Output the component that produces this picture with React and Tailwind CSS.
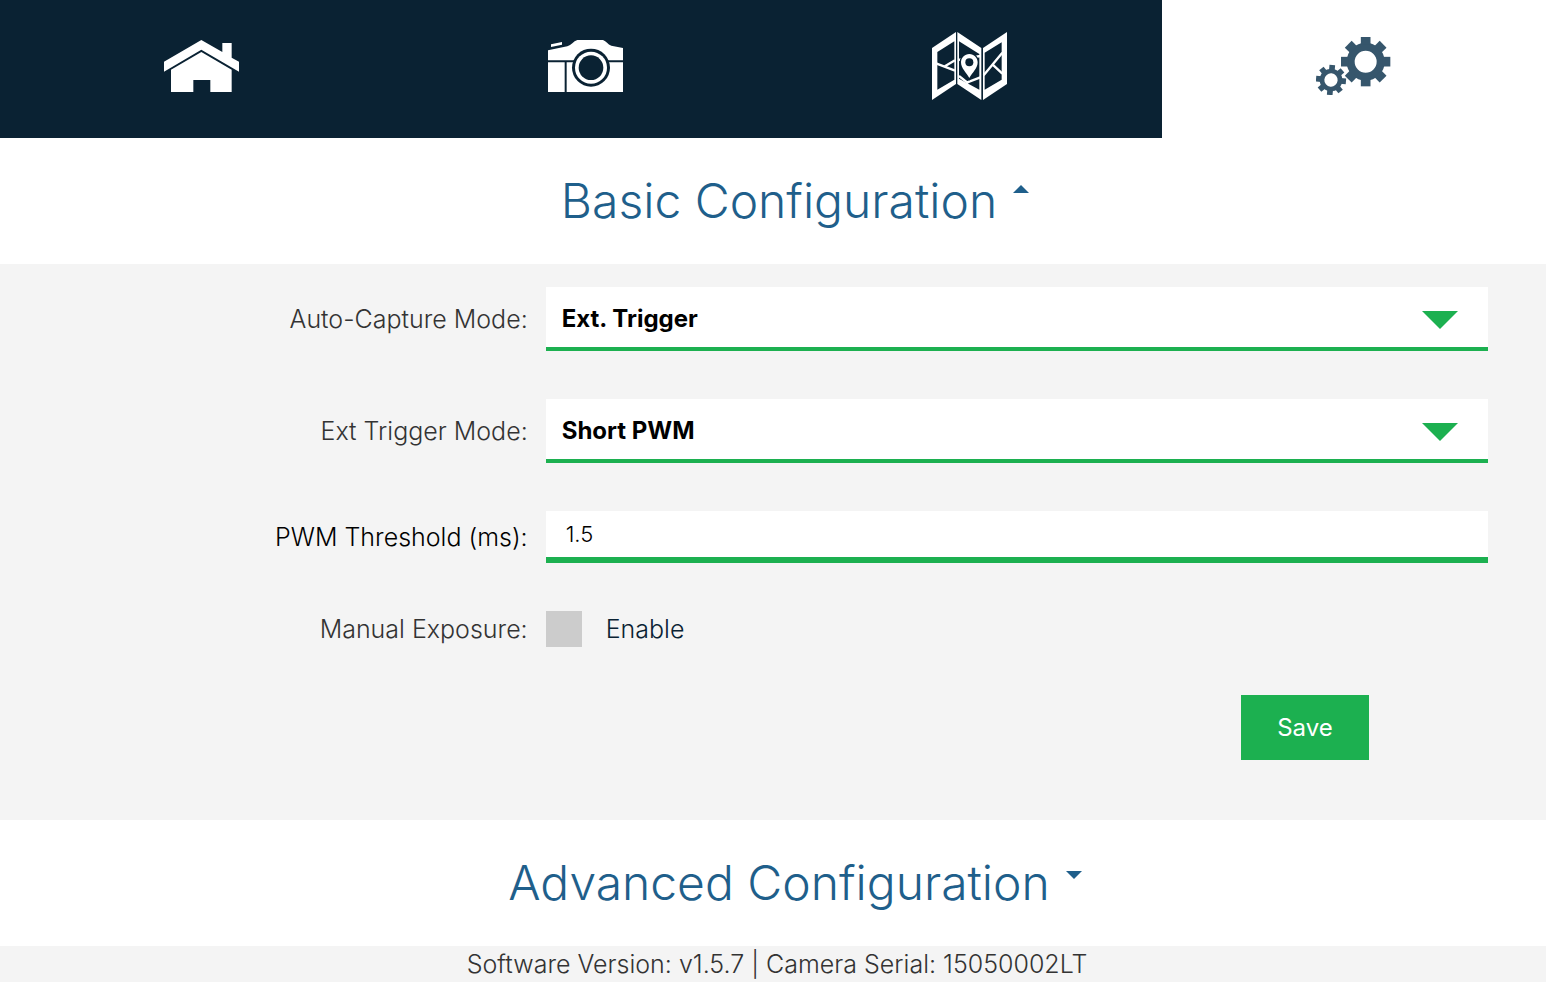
import { useState } from "react";

function HomeIcon() {
  return (
    <svg viewBox="0 0 225 156" className="w-[75px]" fill="currentColor" aria-hidden="true">
      <path d="M0 65 112 0l63 36V9h28v44l22 12v30L112 29 0 95z" />
      <path d="M21 89 112 36l91 53v67h-64v-36H88v36H21z" />
    </svg>
  );
}

function CameraIcon() {
  return (
    <svg viewBox="0 0 225 156" className="w-[75px]" fill="currentColor" aria-hidden="true">
      <path d="m9 13 33-7v8L9 21z" />
      <path d="M0 31 58 19C70 15 76 4 88 0h77c10 4 14 13 25 17l35 7v37H0z" />
      <path d="M0 67h50v89H0zM56 67h169v89H56z" />
      <circle cx="129" cy="83" r="57" className="fill-[#0a2233]" />
      <circle cx="129" cy="83" r="48" />
      <circle cx="129" cy="83" r="37" className="fill-[#0a2233]" />
    </svg>
  );
}

function MapIcon() {
  return (
    <svg viewBox="0 0 225 204" className="w-[75px]" fill="currentColor" aria-hidden="true">
      <path fillRule="evenodd" d="M0 48 72 0v156L0 204zM16 60v113l51-30V28z" />
      <path fillRule="evenodd" d="M76 0l72 48v156l-72-48zM81 28v112l61 33V66z" />
      <path fillRule="evenodd" d="M153 48 225 0v156l-72 48zM158 62v111l51-30V31z" />
      <g fill="none" stroke="currentColor" strokeWidth="7">
        <path d="m14 95 55 21M36 104l33-19" />
        <path d="m79 84 66-12M81 132l28 22M104 152l41-16" />
        <path d="m155 130 56-68M182 98l29 27" />
      </g>
      <path
        d="M112 66c-14 0-25 11-25 25 0 18 16 31 25 47 9-16 25-29 25-47 0-14-11-25-25-25z"
        className="stroke-[#0a2233]"
        strokeWidth="8"
      />
      <path d="M112 66c-14 0-25 11-25 25 0 18 16 31 25 47 9-16 25-29 25-47 0-14-11-25-25-25z" />
      <circle cx="112" cy="91" r="12" className="fill-[#0a2233]" />
    </svg>
  );
}

function Gear({ cx, cy, r, body, hole, tooth, tilt }) {
  return (
    <g transform={`translate(${cx} ${cy}) rotate(${tilt})`}>
      <circle r={(body + hole) / 2} fill="none" stroke="currentColor" strokeWidth={body - hole} />
      {[0, 45, 90, 135, 180, 225, 270, 315].map((angle) => (
        <rect
          key={angle}
          x={-tooth / 2}
          y={-r}
          width={tooth}
          height={r - body + 6}
          transform={`rotate(${angle})`}
        />
      ))}
    </g>
  );
}

function GearsIcon() {
  return (
    <svg viewBox="0 0 225 174" className="w-[75px]" fill="currentColor" aria-hidden="true">
      <Gear cx={149} cy={74} r={74} body={57} hole={33} tooth={29} tilt={0} />
      <Gear cx={45} cy={129} r={45} body={34} hole={20} tooth={17} tilt={5} />
    </svg>
  );
}

const tabs = [
  { name: "Home", Icon: HomeIcon },
  { name: "Camera", Icon: CameraIcon },
  { name: "Map", Icon: MapIcon },
  { name: "Settings", Icon: GearsIcon },
];

function SectionHeader({ title, open, onClick }) {
  return (
    <h2 className="bg-white">
      <button
        type="button"
        aria-expanded={open}
        onClick={onClick}
        className="flex h-[126px] w-full items-center justify-center gap-4 pl-11 text-5xl font-light text-[#1f5f8b]"
      >
        {title}
        {open ? (
          <svg viewBox="0 0 16 8" className="mb-6 w-4" fill="currentColor" aria-hidden="true">
            <path d="M0 8 8 0l8 8z" />
          </svg>
        ) : (
          <svg viewBox="0 0 16 8" className="mb-4 w-4" fill="currentColor" aria-hidden="true">
            <path d="M0 0h16L8 8z" />
          </svg>
        )}
      </button>
    </h2>
  );
}

function Row({ id, label, dark, children }) {
  return (
    <div className="grid grid-cols-[14fr_25fr] items-center gap-[18px]">
      <label
        htmlFor={id}
        className={`text-right text-[25px] leading-8 font-light ${dark ? "text-black" : "text-[#333333]"}`}
      >
        {label}
      </label>
      {children}
    </div>
  );
}

function Select({ id, options }) {
  return (
    <div className="relative">
      <select
        id={id}
        className="block h-16 w-full appearance-none border-b-4 border-[#1cb050] bg-white pt-1 pr-20 pl-4 text-2xl font-bold text-black outline-none"
      >
        {options.map((option) => (
          <option key={option}>{option}</option>
        ))}
      </select>
      <svg
        viewBox="0 0 36 18"
        className="pointer-events-none absolute top-6 right-[30px] w-9 text-[#1cb050]"
        fill="currentColor"
        aria-hidden="true"
      >
        <path d="M0 0h36L18 18z" />
      </svg>
    </div>
  );
}

export default function App() {
  const [activeTab, setActiveTab] = useState("Settings");
  const [openSection, setOpenSection] = useState("basic");
  const [threshold, setThreshold] = useState("1.5");

  const toggle = (section) => setOpenSection(openSection === section ? null : section);

  return (
    <div className="min-h-screen bg-white font-[Inter,'Liberation_Sans',sans-serif]">
      <nav className="flex bg-[#0a2233] pl-[10px]">
        {tabs.map(({ name, Icon }) => (
          <button
            key={name}
            type="button"
            aria-label={name}
            onClick={() => setActiveTab(name)}
            className={`flex h-[138px] flex-1 items-center justify-center pr-0.5 pb-1.5 ${
              activeTab === name ? "bg-white text-[#36566c]" : "text-white"
            }`}
          >
            <Icon />
          </button>
        ))}
      </nav>

      <SectionHeader
        title="Basic Configuration"
        open={openSection === "basic"}
        onClick={() => toggle("basic")}
      />

      {openSection === "basic" && (
        <form
          onSubmit={(e) => e.preventDefault()}
          className="flex flex-col gap-12 bg-[#f4f4f4] pt-[23px] pr-[58px] pb-[60px]"
        >
          <Row id="capture-mode" label="Auto-Capture Mode:">
            <Select id="capture-mode" options={["Ext. Trigger", "Timer", "Overlap"]} />
          </Row>
          <Row id="trigger-mode" label="Ext Trigger Mode:">
            <Select id="trigger-mode" options={["Short PWM", "Long PWM", "GPIO"]} />
          </Row>
          <Row id="threshold" label="PWM Threshold (ms):" dark>
            <input
              id="threshold"
              type="text"
              value={threshold}
              onChange={(e) => setThreshold(e.target.value)}
              className="h-[52px] w-full border-b-6 border-[#1cb050] bg-white px-5 text-[22px] font-light text-black outline-none"
            />
          </Row>
          <Row id="exposure" label="Manual Exposure:">
            <div className="flex items-center gap-6">
              <input
                id="exposure"
                type="checkbox"
                className="size-9 appearance-none bg-[#cccccc] checked:bg-[#1cb050]"
              />
              <label htmlFor="exposure" className="text-[25px] leading-8 font-light text-[#0a2233]">
                Enable
              </label>
            </div>
          </Row>
          <div className="flex justify-end pr-[119px]">
            <button type="submit" className="h-[65px] w-32 bg-[#1cb050] text-2xl text-white">
              Save
            </button>
          </div>
        </form>
      )}

      <SectionHeader
        title="Advanced Configuration"
        open={openSection === "advanced"}
        onClick={() => toggle("advanced")}
      />

      <footer className="bg-[#f4f4f4] pl-2 text-center text-[25px] leading-9 font-light text-[#333333]">
        Software Version: v1.5.7 | Camera Serial: 15050002LT
      </footer>
    </div>
  );
}
